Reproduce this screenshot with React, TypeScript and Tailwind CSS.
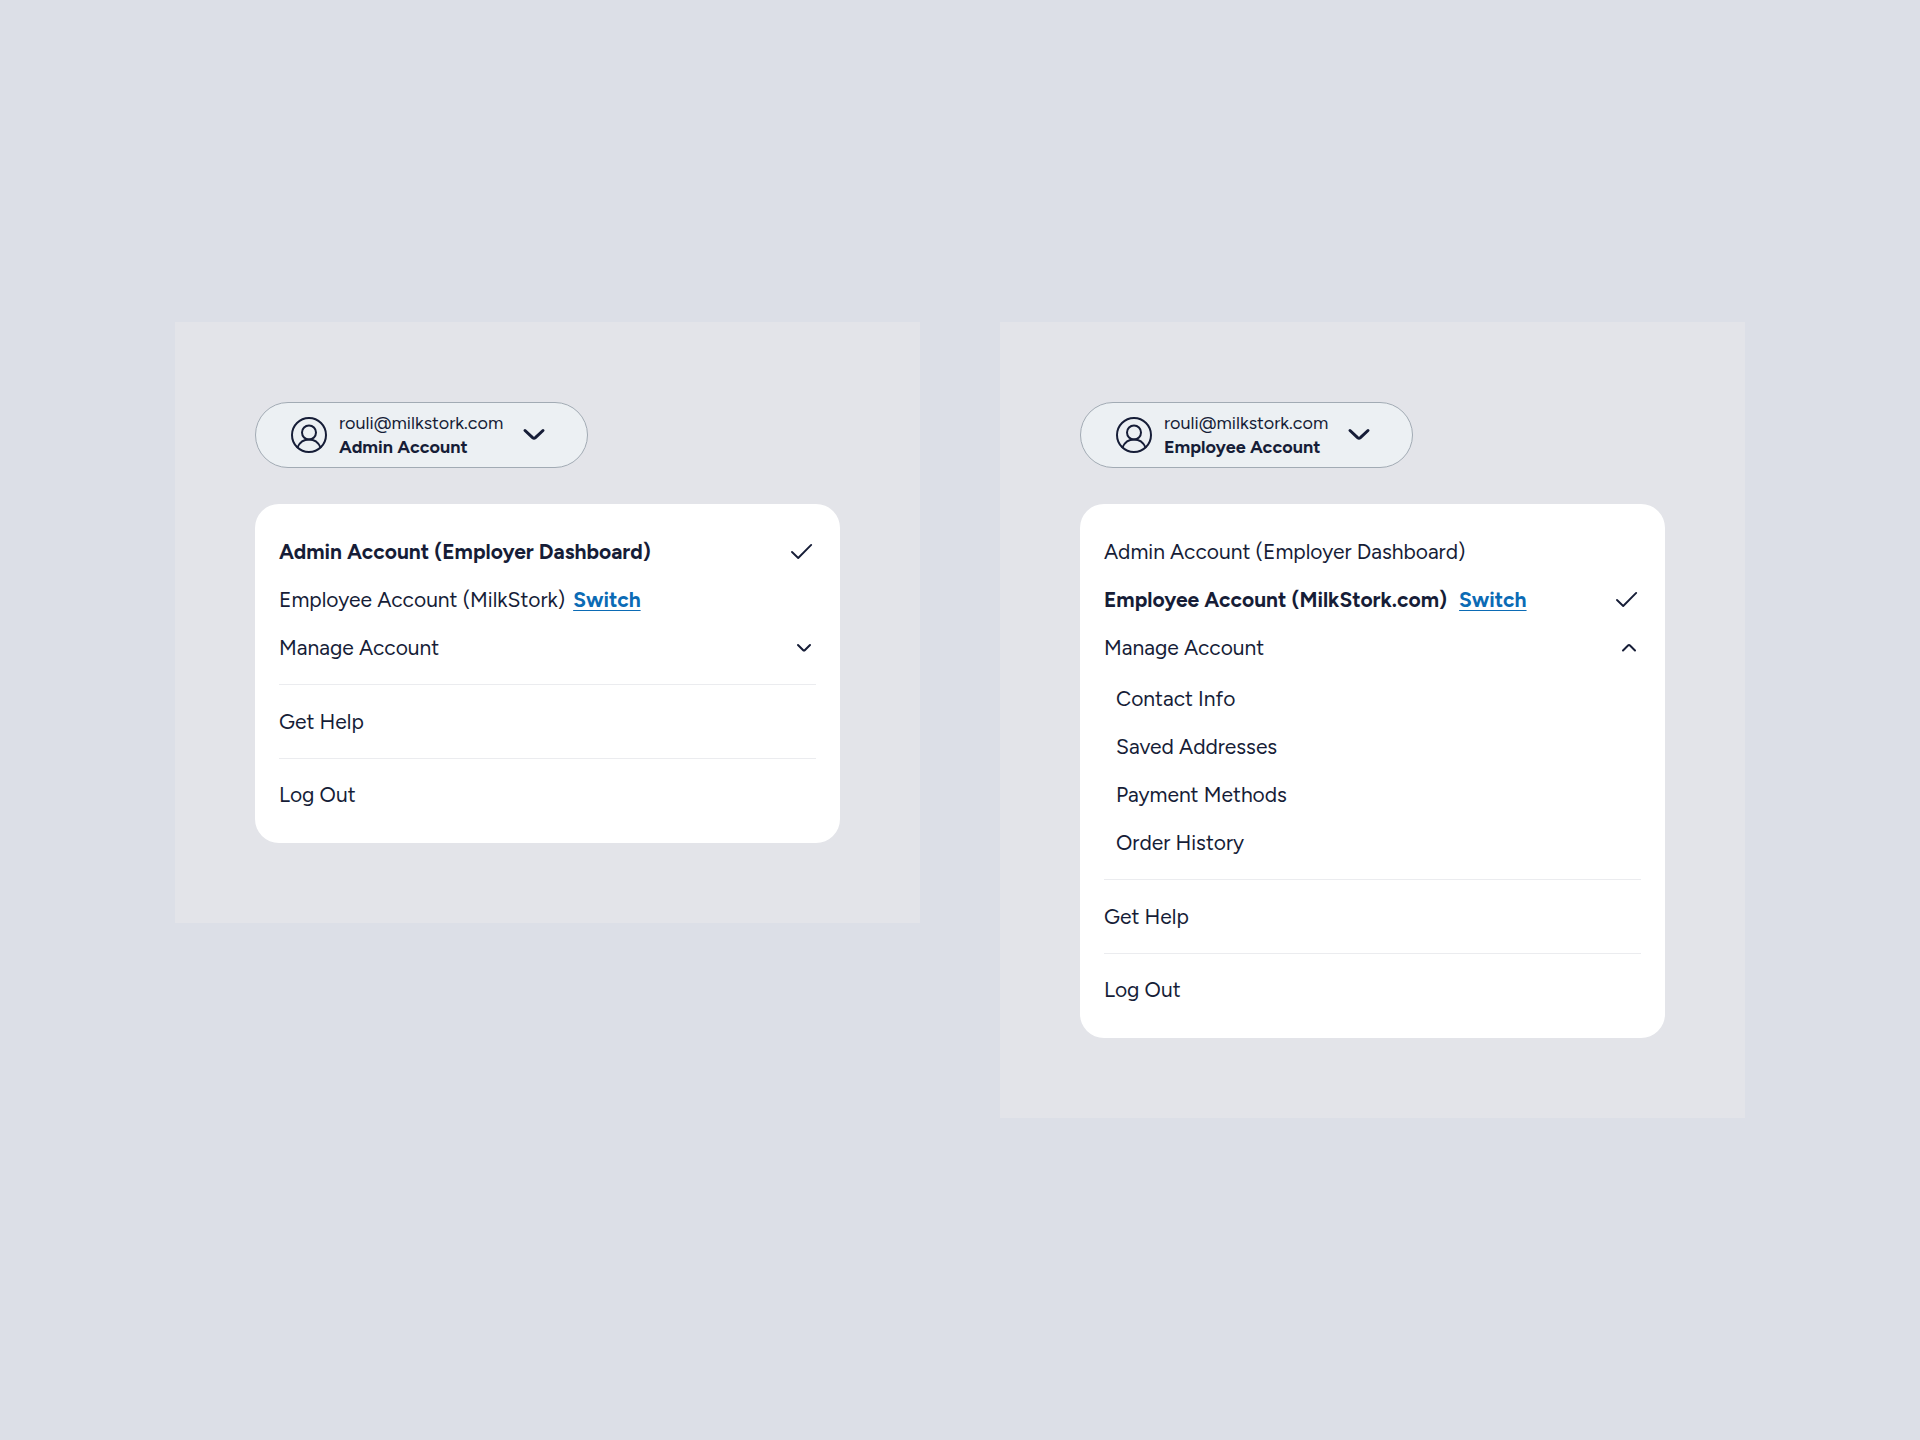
import React, { useState } from "react";

const fontStack = "font-['Figtree','Lato',sans-serif]";

function UserIcon() {
  return (
    <svg className="size-9 shrink-0" viewBox="0 0 36 36" fill="none" stroke="currentColor" strokeWidth="2" strokeLinecap="round" aria-hidden="true">
      <circle cx="18" cy="18" r="17" />
      <circle cx="18" cy="15.5" r="7" />
      <path d="M6.5 30.3C8.6 25.6 12.8 22.5 18 22.5s9.4 3.1 11.5 7.8" />
    </svg>
  );
}

function CheckIcon() {
  return (
    <svg className="size-7 shrink-0" viewBox="0 0 28 28" fill="none" stroke="currentColor" strokeWidth="1.9" strokeLinecap="round" strokeLinejoin="round" role="img" aria-label="Current account">
      <path d="M4 14l6.2 6L23.2 6.9" />
    </svg>
  );
}

function AccountPill({ account }: { account: string }) {
  return (
    <button type="button" className="flex items-center gap-3 rounded-full border border-[#a2abb4] bg-[#ecf0f3] py-2 pl-[35px] pr-9 text-left">
      <UserIcon />
      <span className="text-lg leading-6">
        <span className="block">rouli@milkstork.com</span>
        <span className="block font-bold">{account}</span>
      </span>
      <svg className="size-9 shrink-0" viewBox="0 0 36 36" fill="none" stroke="currentColor" strokeWidth="3" strokeLinecap="round" strokeLinejoin="round" aria-hidden="true">
        <path d="M10 13.5l7.6 7.2q1.4 1.2 2.8 0L28 13.5" />
      </svg>
    </button>
  );
}

function AccountRow({ name, current, children }: { name: string; current: boolean; children?: React.ReactNode }) {
  return (
    <div className="flex h-12 items-center justify-between">
      <div className={current ? "flex items-center gap-3 font-bold" : "flex items-center gap-2"}>
        <a href="#account">{name}</a>
        {children}
      </div>
      {current && <CheckIcon />}
    </div>
  );
}

function SwitchLink() {
  return (
    <a href="#switch" className="font-bold text-[#0b6bb5] underline decoration-1 underline-offset-3">
      Switch
    </a>
  );
}

function MenuLink({ label }: { label: string }) {
  return (
    <a href="#menu" className="flex h-12 items-center">
      {label}
    </a>
  );
}

function Panel({ admin, employeeLabel, links }: { admin: boolean; employeeLabel: string; links: string[] }) {
  const [open, setOpen] = useState(!admin);
  return (
    <section className="flex flex-1 flex-col items-start gap-9 bg-[#e3e4e9] p-20">
      <AccountPill account={admin ? "Admin Account" : "Employee Account"} />
      <nav className="w-full rounded-3xl bg-white p-6 text-[21px] leading-7">
        <AccountRow name="Admin Account (Employer Dashboard)" current={admin} />
        <AccountRow name={employeeLabel} current={!admin}>
          <SwitchLink />
        </AccountRow>
        <button type="button" aria-expanded={open} onClick={() => setOpen(!open)} className="flex h-12 w-full items-center justify-between text-left">
          Manage Account
          <svg className="size-6 shrink-0" viewBox="0 0 24 24" fill="none" stroke="currentColor" strokeWidth="2" strokeLinecap="round" strokeLinejoin="round" aria-hidden="true">
            {open ? <path d="M6 14.5l5-5q1-1 2 0l5 5" /> : <path d="M6 9l5 5q1 1 2 0l5-5" />}
          </svg>
        </button>
        {open && (
          <div className="mt-[3px] pl-3">
            {links.map((l) => (
              <MenuLink key={l} label={l} />
            ))}
          </div>
        )}
        <hr className="mt-3 mb-[13px] border-[#ebecef]" />
        <MenuLink label="Get Help" />
        <hr className="my-3 border-[#ebecef]" />
        <MenuLink label="Log Out" />
      </nav>
    </section>
  );
}

export default function App() {
  const links = ["Contact Info", "Saved Addresses", "Payment Methods", "Order History"];
  return (
    <main className={`flex min-h-screen items-center bg-[#dcdfe7] px-[175px] text-[#161d37] ${fontStack}`}>
      <div className="flex w-full items-start gap-20">
        <Panel admin employeeLabel="Employee Account (MilkStork)" links={links} />
        <Panel admin={false} employeeLabel="Employee Account (MilkStork.com)" links={links} />
      </div>
    </main>
  );
}
